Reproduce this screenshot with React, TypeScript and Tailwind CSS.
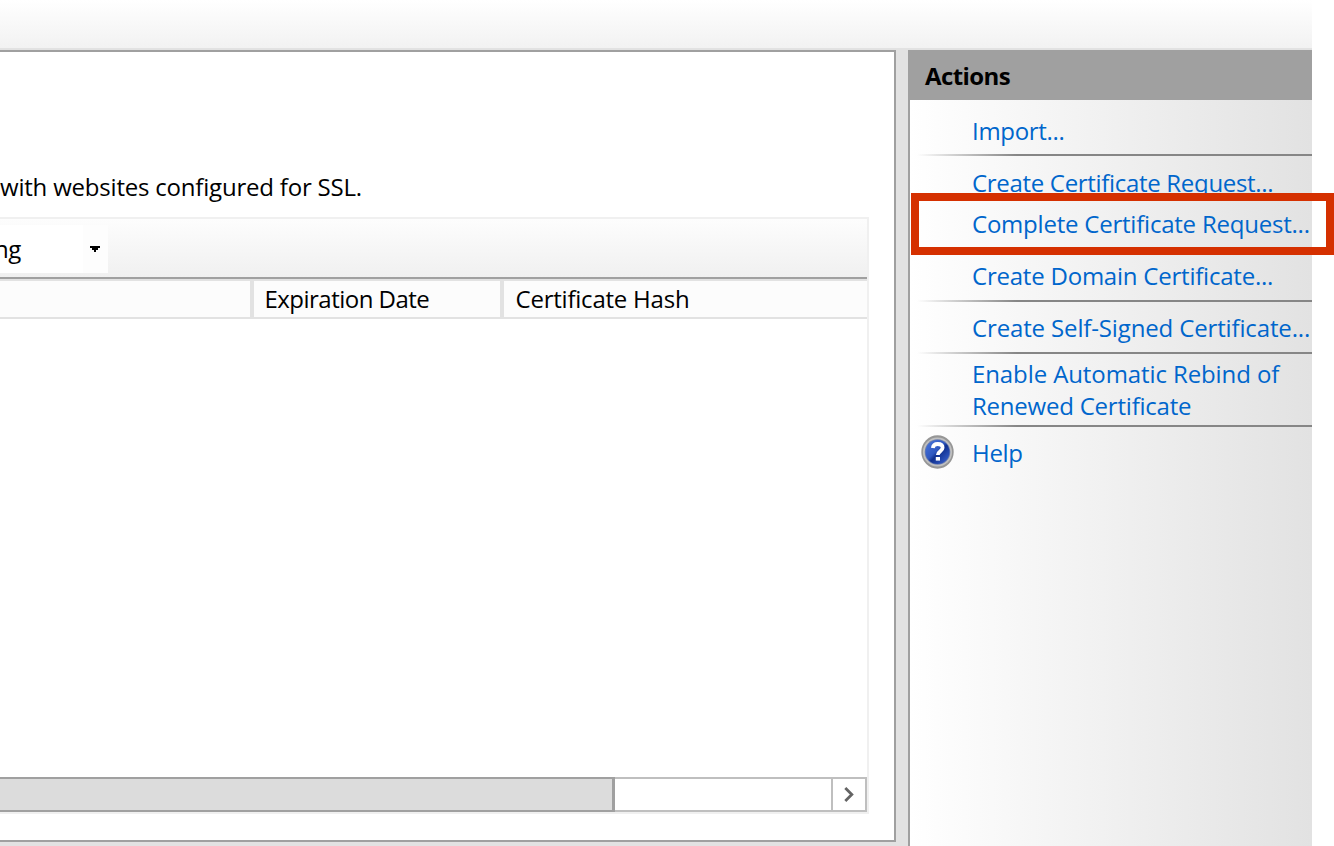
import React from "react";

function HelpIcon() {
  return (
    <svg width="33" height="34" viewBox="0 0 33 34" className="block">
      <defs>
        <linearGradient id="ball" x1="0" y1="0" x2="1" y2="1">
          <stop offset="0" stopColor="#4a76dc" />
          <stop offset="0.45" stopColor="#2f58c0" />
          <stop offset="0.55" stopColor="#10308f" />
          <stop offset="1" stopColor="#3f69d8" />
        </linearGradient>
      </defs>
      <ellipse cx="16.500" cy="17" rx="16.200" ry="16.700" fill="#969696" />
      <circle cx="16.500" cy="17" r="14.600" fill="#c0c0c0" />
      <circle cx="16.500" cy="17" r="12.800" fill="#6d7fae" />
      <circle cx="16.500" cy="17" r="12" fill="url(#ball)" />
      <path d="M11.800 13c.4-2.800 2.200-4 4.900-4 2.900 0 4.900 1.300 4.900 3.800 0 3.500-4.700 3.400-4.800 7.200" fill="none" stroke="#fff" strokeWidth="3.800" />
      <rect x="14.800" y="22" width="4.200" height="3.600" fill="#fff" />
    </svg>
  );
}

function Rule() {
  return <div className="ml-[7px] h-[2px] shrink-0 bg-linear-to-r from-[#8a8a8a]/0 to-[#868686] to-[100px]" />;
}

function Action({ label, className }: { label: string; className: string }) {
  return <div className={`shrink-0 whitespace-nowrap pl-[62px] ${className}`}>{label}</div>;
}

export default function App() {
  return (
    <div className="relative flex h-[846px] w-[1334px] overflow-hidden bg-white font-['Open_Sans','Noto_Sans',sans-serif] text-[24px] leading-[32px] text-black">
      <div className="flex w-[1312px] flex-col bg-[#e2e2e2]">
        <div className="h-[48px] shrink-0 bg-linear-to-b from-white to-[#f2f2f2]" />
        <div className="flex min-h-0 flex-1 pt-[2px]">
          <main className="flex h-[792px] w-[896px] shrink-0 flex-col border-y-2 border-r-2 border-[#a0a0a0] bg-white">
            <p className="mt-[119px] h-[46px] shrink-0 whitespace-nowrap tracking-[-0.200px]">with websites configured for SSL.</p>
            <section className="flex h-[597px] w-[869px] shrink-0 flex-col border-y-2 border-r-2 border-[#f0f0f0]">
              <div className="flex h-[58px] shrink-0 bg-linear-to-b from-[#fdfdfd] to-[#f0f0f0] pt-[6px]">
                <div className="flex h-[48px] w-[108px] bg-white">
                  <span className="w-[83px] pt-[8px] tracking-[-0.500px]"><span className="-ml-[6px]">ng</span></span>
                  <span className="flex flex-1 bg-[#fdfdfd] pl-[7px] pt-[21px]">
                    <svg width="10" height="6" viewBox="0 0 10 6" shapeRendering="crispEdges"><path d="M0 0h10v2H8v2H6v2H4V4H2V2H0z" /></svg>
                  </span>
                </div>
              </div>
              <div className="h-[2px] shrink-0 bg-[#a0a0a0]" />
              <div className="flex h-[40px] shrink-0 border-y-2 border-[#e2e2e2] bg-[#fcfcfc]">
                <div className="w-[254px] border-r-4 border-[#e2e2e2]" />
                <div className="w-[250px] border-r-4 border-[#e2e2e2] pl-[10.500px] pt-[2px] tracking-[-0.520px]">Expiration Date</div>
                <div className="pl-[11.500px] pt-[2px] tracking-[-0.220px]">Certificate Hash</div>
              </div>
              <div className="flex-1" />
              <div className="flex h-[35px] shrink-0 border-y-2 border-r-2 border-[#bfbfbf] bg-white">
                <div className="-my-[2px] w-[615px] border-y-2 border-r-[3px] border-[#a0a0a0] bg-[#dcdcdc]" />
                <div className="w-[218px] border-r-2 border-[#bfbfbf]" />
                <svg className="ml-[11px] mt-[8px]" width="10" height="15" viewBox="0 0 10 15"><path d="M1.300 1l6.500 6.500-6.500 6.500" fill="none" stroke="#646464" strokeWidth="2.800" /></svg>
              </div>
            </section>
          </main>
          <div className="w-[12px] shrink-0" />
          <aside className="flex w-[404px] flex-col border-l-2 border-[#a0a0a0] bg-linear-to-r from-white to-[#e2e2e2]">
            <header className="h-[50px] shrink-0 bg-[#a0a0a0] pl-[15px] pt-[10px] font-bold tracking-[-0.600px]">Actions</header>
            <nav className="flex flex-col text-[#0066cc]">
              <Action label="Import..." className="h-[54px] pt-[15px] tracking-[-0.300px]" />
              <Rule />
              <Action label="Create Certificate Request..." className="h-[42px] pt-[11px] tracking-[-0.310px]" />
              <Action label="Complete Certificate Request..." className="h-[50px] pt-[10px] tracking-[-0.220px]" />
              <Rule />
              <Action label="Create Domain Certificate..." className="h-[50px] pt-[10px] tracking-[-0.220px]" />
              <Rule />
              <Action label="Create Self-Signed Certificate..." className="h-[50px] pt-[10px] tracking-[-0.140px]" />
              <Rule />
              <Action label="Enable Automatic Rebind of" className="h-[36px] pt-[4px] tracking-[-0.100px]" />
              <Action label="Renewed Certificate" className="h-[35px] tracking-[-0.220px]" />
              <Rule />
              <div className="flex">
                <div className="pl-[11px] pt-[8px]"><HelpIcon /></div>
                <div className="pl-[18px] pt-[10px] tracking-[-0.300px]">Help</div>
              </div>
            </nav>
          </aside>
        </div>
      </div>
      <div className="absolute left-[911px] top-[193px] h-[62px] w-[423px] border-8 border-[#d53000]" />
    </div>
  );
}
